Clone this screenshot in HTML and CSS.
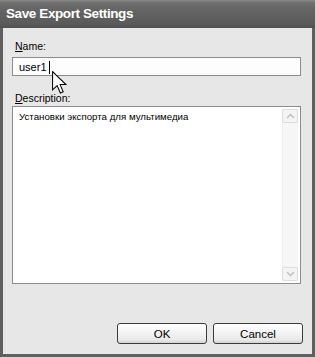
FILE: index.html
```html
<!DOCTYPE html>
<html>
<head>
    <title>Save Export Settings</title>
    <link rel="stylesheet" href="styles.css">
</head>
<body>
    <div class="window">
        <div class="titlebar">Save Export Settings</div>
        <div class="client">
            <label class="field-label" for="name"><u>N</u>ame:</label>
            <div class="input" id="name">user1<span class="caret"></span></div>

            <label class="field-label desc-label"><u>D</u>escription:</label>
            <div class="textarea">
                <div class="textarea-text">Установки экспорта для мультимедиа</div>
                <div class="scrollbar">
                    <div class="sb-btn">
                        <svg width="9" height="6" viewBox="0 0 9 6"><path d="M1 5 L4.5 1.5 L8 5" fill="none" stroke="#c4c4c4" stroke-width="1.6"/></svg>
                    </div>
                    <div class="sb-track"></div>
                    <div class="sb-btn">
                        <svg width="9" height="6" viewBox="0 0 9 6"><path d="M1 1 L4.5 4.5 L8 1" fill="none" stroke="#c4c4c4" stroke-width="1.6"/></svg>
                    </div>
                </div>
            </div>

            <div class="buttons">
                <button class="btn">OK</button>
                <button class="btn">Cancel</button>
            </div>
        </div>

        <svg class="pointer" width="16" height="24" viewBox="0 0 14 21">
            <path d="M0.5 0.5 L0.5 16.5 L4.5 12.8 L7.3 19.3 L9.8 18.2 L7.1 11.9 L12.2 11.9 Z" fill="#fff" stroke="#000" stroke-width="0.9" stroke-linejoin="miter"/>
        </svg>
    </div>
</body>
</html>
```

FILE: styles.css
```css
body { margin: 0; background: #e6e6e6; font-family: "Liberation Sans", Arial, sans-serif; }

.window { position: relative; width: 315px; height: 357px; box-sizing: border-box; background: #5f5f5f; display: flex; flex-direction: column; }

.titlebar { height: 28px; box-sizing: border-box; padding: 6px 0 0 6px; color: #fff; font-weight: bold; font-size: 13.5px; letter-spacing: -0.4px;
    background: linear-gradient(to bottom, #8a8a8a 0, #6e6e6e 3px, #646464 10px, #5a5a5a 24px, #4e4e4e 28px); }

.client { flex: 1; margin: 0 3px 3px 3px; background: #e7e7e7; padding: 11px 11px 0 9px; font-size: 10.5px; color: #000; }

.field-label { display: block; line-height: 14px; height: 14px; margin: 0 0 4px 3px; }
.desc-label { margin-top: 15px; margin-bottom: 1px; }

.input { height: 19px; box-sizing: border-box; border: 1px solid #8c8c8c; background: #fdfdfd; padding: 1px 0 0 6px; line-height: 14px; font-size: 11px; display: flex; align-items: center; }
.caret { display: inline-block; width: 1px; height: 13px; background: #000; margin-left: 2px; }

.textarea { height: 178px; box-sizing: border-box; border: 1px solid #8c8c8c; background: #fff; padding: 2px; display: flex; }
.textarea-text { flex: 1; padding: 1px 0 0 4px; font-size: 9.7px; line-height: 13px; }

.scrollbar { width: 16px; display: flex; flex-direction: column; background: #f3f3f3; }
.sb-btn { height: 14px; box-sizing: border-box; border: 1px solid #dcdcdc; border-radius: 2px; background: #f4f4f4; display: flex; align-items: center; justify-content: center; }
.sb-track { flex: 1; background: #f6f6f6; border-left: 1px solid #efefef; }

.buttons { display: flex; justify-content: flex-end; gap: 6px; margin: 39px -2px 0 0; }
.btn { width: 90px; height: 21px; box-sizing: border-box; border: 1px solid #3c3c3c; border-radius: 3px; font-family: "Liberation Sans", Arial, sans-serif; font-size: 11.5px; color: #000; padding: 0;
    background: linear-gradient(to bottom, #ffffff 0, #f5f5f5 40%, #e8e8e8 85%, #d2d2d2 100%); }

.pointer { position: absolute; left: 52px; top: 71px; }
```
